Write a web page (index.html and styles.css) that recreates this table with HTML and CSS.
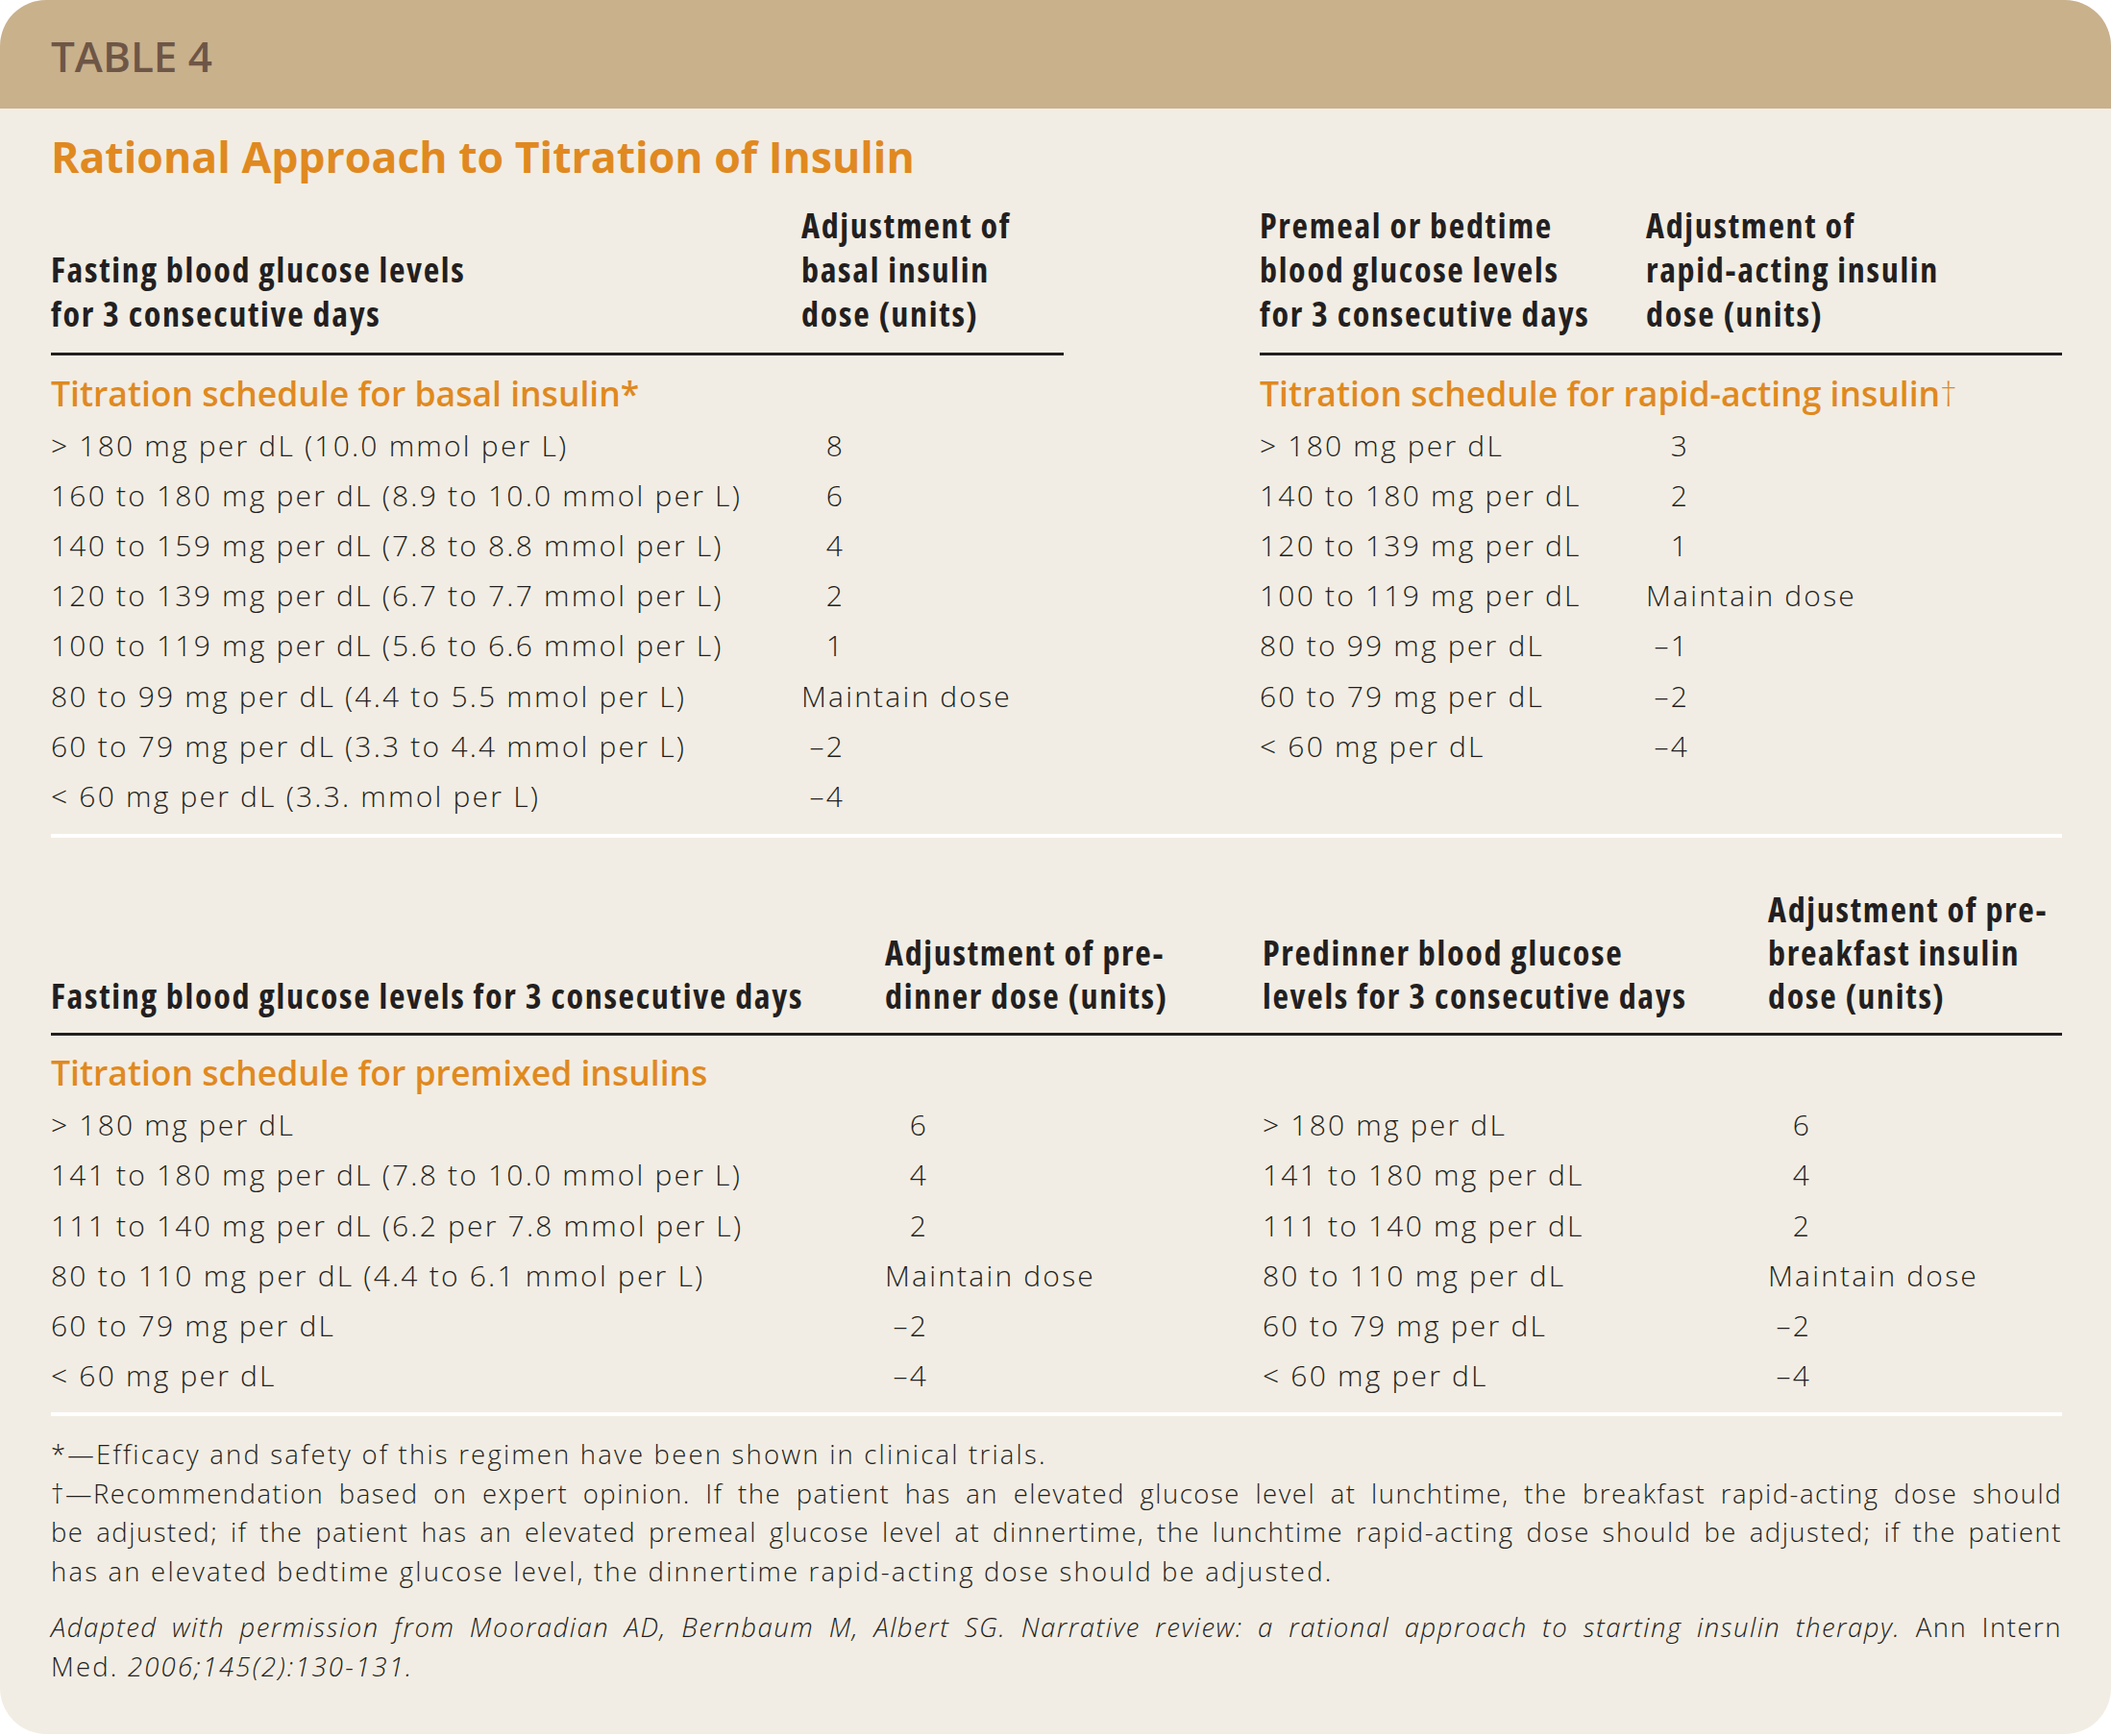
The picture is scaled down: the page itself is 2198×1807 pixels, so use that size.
FILE: index.html
```html
<!DOCTYPE html>
<html lang="en">
<head>
<meta charset="utf-8">
<title>Table 4 – Rational Approach to Titration of Insulin</title>
<link rel="stylesheet" href="styles.css">
</head>
<body>
<div class="card">
  <div class="band"><span class="band-label">TABLE 4</span></div>
  <div class="content">
    <h1 class="title">Rational Approach to Titration of Insulin</h1>

    <div class="top">
      <div class="tbl tbl-basal">
        <div class="th">Fasting blood glucose levels<br>for 3 consecutive days</div>
        <div class="th">Adjustment of<br>basal insulin<br>dose (units)</div>
        <div class="label">Titration schedule for basal insulin*</div>
        <div class="td">&gt; 180 mg per dL (10.0 mmol per L)</div><div class="td"><span class="num">8</span></div>
        <div class="td">160 to 180 mg per dL (8.9 to 10.0 mmol per L)</div><div class="td"><span class="num">6</span></div>
        <div class="td">140 to 159 mg per dL (7.8 to 8.8 mmol per L)</div><div class="td"><span class="num">4</span></div>
        <div class="td">120 to 139 mg per dL (6.7 to 7.7 mmol per L)</div><div class="td"><span class="num">2</span></div>
        <div class="td">100 to 119 mg per dL (5.6 to 6.6 mmol per L)</div><div class="td"><span class="num">1</span></div>
        <div class="td">80 to 99 mg per dL (4.4 to 5.5 mmol per L)</div><div class="td">Maintain dose</div>
        <div class="td">60 to 79 mg per dL (3.3 to 4.4 mmol per L)</div><div class="td"><span class="num">–2</span></div>
        <div class="td">&lt; 60 mg per dL (3.3. mmol per L)</div><div class="td"><span class="num">–4</span></div>
      </div>
      <div class="tbl tbl-rapid">
        <div class="th">Premeal or bedtime<br>blood glucose levels<br>for 3 consecutive days</div>
        <div class="th">Adjustment of<br>rapid-acting insulin<br>dose (units)</div>
        <div class="label">Titration schedule for rapid-acting insulin<span class="dag">†</span></div>
        <div class="td">&gt; 180 mg per dL</div><div class="td"><span class="num">3</span></div>
        <div class="td">140 to 180 mg per dL</div><div class="td"><span class="num">2</span></div>
        <div class="td">120 to 139 mg per dL</div><div class="td"><span class="num">1</span></div>
        <div class="td">100 to 119 mg per dL</div><div class="td">Maintain dose</div>
        <div class="td">80 to 99 mg per dL</div><div class="td"><span class="num">–1</span></div>
        <div class="td">60 to 79 mg per dL</div><div class="td"><span class="num">–2</span></div>
        <div class="td">&lt; 60 mg per dL</div><div class="td"><span class="num">–4</span></div>
      </div>
    </div>

    <div class="divider divider-1"></div>

    <div class="tbl tbl-premix">
      <div class="th">Fasting blood glucose levels for 3 consecutive days</div>
      <div class="th">Adjustment of pre-<br>dinner dose (units)</div>
      <div class="th">Predinner blood glucose<br>levels for 3 consecutive days</div>
      <div class="th">Adjustment of pre-<br>breakfast insulin<br>dose (units)</div>
      <div class="label">Titration schedule for premixed insulins</div>
      <div class="td">&gt; 180 mg per dL</div><div class="td"><span class="num">6</span></div><div class="td">&gt; 180 mg per dL</div><div class="td"><span class="num">6</span></div>
      <div class="td">141 to 180 mg per dL (7.8 to 10.0 mmol per L)</div><div class="td"><span class="num">4</span></div><div class="td">141 to 180 mg per dL</div><div class="td"><span class="num">4</span></div>
      <div class="td">111 to 140 mg per dL (6.2 per 7.8 mmol per L)</div><div class="td"><span class="num">2</span></div><div class="td">111 to 140 mg per dL</div><div class="td"><span class="num">2</span></div>
      <div class="td">80 to 110 mg per dL (4.4 to 6.1 mmol per L)</div><div class="td">Maintain dose</div><div class="td">80 to 110 mg per dL</div><div class="td">Maintain dose</div>
      <div class="td">60 to 79 mg per dL</div><div class="td"><span class="num">–2</span></div><div class="td">60 to 79 mg per dL</div><div class="td"><span class="num">–2</span></div>
      <div class="td">&lt; 60 mg per dL</div><div class="td"><span class="num">–4</span></div><div class="td">&lt; 60 mg per dL</div><div class="td"><span class="num">–4</span></div>
    </div>

    <div class="divider divider-2"></div>

    <div class="notes">
      <p class="note">*—Efficacy and safety of this regimen have been shown in clinical trials.</p>
      <p class="note"><span class="line just"><span class="nb">†—Recommendation</span> based on expert opinion. If the patient has an elevated glucose level at lunchtime, the breakfast rapid-acting dose should</span><span class="line just">be adjusted; if the patient has an elevated premeal glucose level at dinnertime, the lunchtime rapid-acting dose should be adjusted; if the patient</span><span class="line">has an elevated bedtime glucose level, the dinnertime rapid-acting dose should be adjusted.</span></p>
    </div>
    <p class="source"><span class="line just"><em>Adapted with permission from Mooradian AD, Bernbaum M, Albert SG. Narrative review: a rational approach to starting insulin therapy.</em> Ann Intern</span><span class="line">Med. <em>2006;145(2):130-131.</em></span></p>
  </div>
</div>
</body>
</html>
```

FILE: styles.css
```css
html, body {
  margin: 0;
  padding: 0;
  background: #ffffff;
}

body {
  font-family: "Open Sans", "Liberation Sans", sans-serif;
  color: #231f20;
}

.card {
  width: 2197px;
  height: 1805px;
  border-radius: 48px;
  background: #f2ede4;
  overflow: hidden;
}

.band {
  height: 113px;
  background: #c9b18c;
  display: flex;
  align-items: center;
  padding: 2px 0 0 53px;
  box-sizing: border-box;
}

.band-label {
  font-size: 44px;
  line-height: 54px;
  font-weight: 600;
  color: #6e5646;
}

.content {
  padding: 0 51px 0 53px;
}

.title {
  margin: 22.6px 0 0 0;
  font-size: 44.6px;
  line-height: 54px;
  font-weight: 700;
  color: #e0891f;
}

.top {
  display: flex;
  align-items: flex-start;
  justify-content: space-between;
  margin-top: 22px;
}

.tbl {
  display: grid;
  align-items: end;
}

.tbl-basal {
  width: 1054px;
  grid-template-columns: 781px 273px;
}

.tbl-rapid {
  width: 835px;
  grid-template-columns: 402px 433px;
}

.tbl-premix {
  grid-template-columns: 868px 393px 526px 306px;
  margin-top: 52.6px;
}

.th {
  font-size: 36px;
  line-height: 46px;
  font-weight: 700;
  font-stretch: 75%;
  letter-spacing: 1.7px;
  padding-bottom: 17.4px;
  border-bottom: 3px solid #231f20;
}

.tbl-premix .th {
  line-height: 45px;
  padding-bottom: 16px;
}

.label {
  grid-column: 1 / -1;
  margin: 15.8px 0 5.8px 0;
  font-size: 35.5px;
  line-height: 46px;
  font-weight: 600;
  color: #e0891f;
}

.tbl-premix .label {
  margin-top: 15.2px;
}

.dag {
  font-weight: 300;
}

.td {
  font-size: 30px;
  line-height: 52.2px;
  font-weight: 300;
  letter-spacing: 2.2px;
  white-space: nowrap;
}

.num {
  display: inline-block;
  width: 45px;
  text-align: right;
}

.divider {
  height: 4px;
  background: #ffffff;
}

.divider-1 {
  margin-top: 12.4px;
}

.divider-2 {
  margin-top: 11.8px;
}

.notes {
  margin-top: 20px;
}

.note,
.source {
  margin: 0;
  font-size: 27.5px;
  line-height: 40.5px;
  font-weight: 300;
  letter-spacing: 2.2px;
}

.source {
  margin-top: 18px;
}

.line {
  display: block;
}

.just {
  letter-spacing: 1.5px;
  text-align: justify;
  text-align-last: justify;
}

.nb {
  display: inline-block;
}

em {
  font-style: italic;
}
```
